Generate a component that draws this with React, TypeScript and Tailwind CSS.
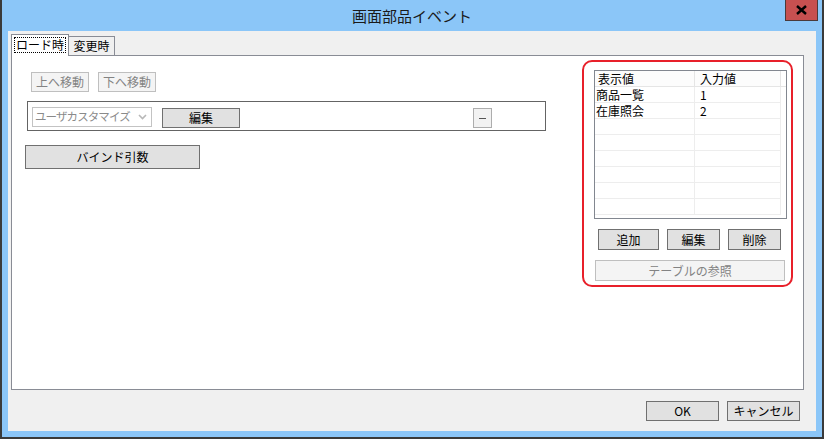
import React from 'react';

const FONT = "font-['Noto_Sans_CJK_JP','Noto_Sans',sans-serif]";

const GrayButton: React.FC<{ label: string; className?: string }> = ({ label, className = '' }) => (
  <div
    className={`flex items-center justify-center border border-[#707070] bg-[#e1e1e1] text-[12px] leading-none text-black ${className}`}
  >
    {label}
  </div>
);

const DisabledButton: React.FC<{ label: string; className?: string }> = ({ label, className = '' }) => (
  <div
    className={`flex items-center justify-center border border-[#bfbfbf] bg-[#f4f4f4] text-[12px] leading-none text-[#838383] ${className}`}
  >
    {label}
  </div>
);

const rows = [
  { label: '商品一覧', value: '1' },
  { label: '在庫照会', value: '2' },
  { label: '', value: '' },
  { label: '', value: '' },
  { label: '', value: '' },
  { label: '', value: '' },
  { label: '', value: '' },
  { label: '', value: '' },
];

export default function App() {
  return (
    <div className={`w-[824px] h-[439px] overflow-hidden bg-[#8bc6f8] border-x-2 border-b-2 border-[#3a3a3a] flex flex-col ${FONT}`}>
      {/* title bar */}
      <div className="relative h-[31px] shrink-0 flex items-center justify-center">
        <span className="text-[15px] text-[#1a1a1a] mt-[2px]">画面部品イベント</span>
        <div className="absolute right-[4px] top-0 w-[33px] h-[21px] bg-[#c75050] border border-t-0 border-[#4a3a3a] flex items-center justify-center">
          <svg width="11" height="10" viewBox="0 0 11 10">
            <path d="M1 1L10 9M10 1L1 9" stroke="#000" strokeWidth="2.4" />
          </svg>
        </div>
      </div>

      {/* client */}
      <div className="mx-[6px] h-[400px] bg-[#f0f0f0] flex flex-col">
        {/* tabs */}
        <div className="flex items-end h-[24px] pl-[3px] relative z-10">
          <div className="h-[22px] px-[2px] pt-[2px] bg-white border border-b-0 border-[#898c95] flex items-start -mb-[1px]">
            <span className="border border-dotted border-black px-[1px] text-[12px] leading-[14px] text-black">ロード時</span>
          </div>
          <div className="h-[19px] w-[46px] bg-[#f0f0f0] border border-b-0 border-l-0 border-[#898c95] flex items-center justify-center text-[12px] text-black">
            変更時
          </div>
        </div>

        {/* panel */}
        <div className="ml-[3px] mr-[12px] h-[335px] bg-white border border-[#898c95] flex">
          <div className="flex-1 flex flex-col">
            <div className="flex gap-[9px] mt-[16px] ml-[19px]">
              <DisabledButton label="上へ移動" className="w-[58px] h-[20px]" />
              <DisabledButton label="下へ移動" className="w-[58px] h-[20px]" />
            </div>
            <div className="mt-[9px] ml-[15px] w-[519px] h-[30px] border border-[#646464] flex items-start pt-[5px] pl-[4px]">
              <div className="w-[120px] h-[20px] border border-[#c3c3c3] flex items-center justify-between pl-[2px] pr-[4px] text-[11.5px] text-[#8a8a8a] whitespace-nowrap overflow-hidden">
                <span className="tracking-[-0.9px]">ユーザカスタマイズ</span>
                <svg width="9" height="6" viewBox="0 0 9 6" className="shrink-0">
                  <path d="M1 1L4.5 4.5L8 1" stroke="#b8b8b8" strokeWidth="1.6" fill="none" />
                </svg>
              </div>
              <GrayButton label="編集" className="ml-[10px] mt-[1px] w-[78px] h-[20px] bg-[#dcdcdc]" />
              <div className="ml-[233px] mt-[1px] w-[19px] h-[20px] border border-[#adadad] bg-[#f2f2f2] flex items-center justify-center">
                <div className="w-[7px] h-[1px] bg-[#555]" />
              </div>
            </div>
            <GrayButton label="バインド引数" className="mt-[14px] ml-[13px] w-[175px] h-[24px] bg-[#dcdcdc]" />
          </div>

          {/* right highlighted area */}
          <div className="mt-[4px] mr-[10px] w-[211px] h-[227px] border-2 border-[#e8202a] rounded-[10px] flex flex-col items-start">
            <div className="mt-[8px] ml-[10px] w-[193px] h-[149px] border border-[#828790] bg-white flex flex-col">
              <div className="flex h-[16px] border-b border-[#e5e5e5] text-[12px] leading-[16px] text-black">
                <div className="w-[100px] pl-[3px] border-r border-[#e5e5e5] bg-[#fcfcfc]">表示値</div>
                <div className="w-[86px] pl-[5px] border-r border-[#e5e5e5] bg-[#fcfcfc]">入力値</div>
              </div>
              {rows.map((r, i) => (
                <div key={i} className="flex h-[16px] text-[12px] leading-[15px] text-black">
                  <div className="w-[100px] pl-[1px] border-r border-b border-[#ededed]">{r.label}</div>
                  <div className="w-[86px] pl-[5px] border-r border-b border-[#ededed]">{r.value}</div>
                </div>
              ))}
            </div>
            <div className="flex gap-[8px] mt-[10px] ml-[14px]">
              <GrayButton label="追加" className="w-[61px] h-[21px] bg-[#dcdcdc]" />
              <GrayButton label="編集" className="w-[53px] h-[21px] bg-[#dcdcdc]" />
              <GrayButton label="削除" className="w-[53px] h-[21px] bg-[#dcdcdc]" />
            </div>
            <DisabledButton label="テーブルの参照" className="mt-[10px] ml-[11px] w-[190px] h-[21px] bg-[#f2f2f2]" />
          </div>
        </div>

        {/* bottom buttons */}
        <div className="flex justify-end gap-[8px] mt-[11px] mr-[16px]">
          <GrayButton label="OK" className="w-[73px] h-[20px]" />
          <GrayButton label="キャンセル" className="w-[73px] h-[20px]" />
        </div>
      </div>
    </div>
  );
}
